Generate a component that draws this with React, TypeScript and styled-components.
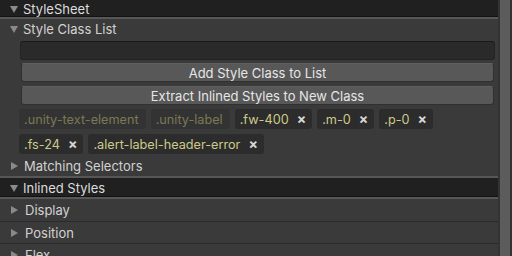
import React from "react";
import styled, { createGlobalStyle } from "styled-components";

const Global = createGlobalStyle`
  html, body { margin: 0; padding: 0; background: #383838; }
  body { font-family: Inter, "Noto Sans", sans-serif; }
`;

const Window = styled.div`
  width: 512px;
  height: 256px;
  display: flex;
  overflow: hidden;
  background: #3a3a3a;
`;

const Main = styled.div`
  flex: 1;
  display: flex;
  flex-direction: column;
  min-width: 0;
`;

const ScrollTrack = styled.div`
  width: 14px;
  background: #333333;
  display: flex;
  padding: 0 2px 0 2px;
  box-sizing: border-box;
`;

const ScrollThumb = styled.div`
  flex: 1;
  background: #5c5c5c;
`;

const Header = styled.div<{ $top?: boolean }>`
  height: ${(p) => (p.$top ? 23 : 19)}px;
  box-sizing: border-box;
  display: flex;
  align-items: center;
  gap: 5px;
  padding-left: 10px;
  background: #202020;
  border-top: ${(p) => (p.$top ? "2px solid #575757" : "none")};
  border-bottom: 2px solid #575757;
  box-shadow: inset 0 -1px 0 #121212;
  color: #dcdcdc;
  font-size: 13px;
  flex-shrink: 0;
`;

const Foldout = styled.div<{ $h: number; $line?: boolean; $indent?: number }>`
  height: ${(p) => p.$h}px;
  box-sizing: border-box;
  display: flex;
  align-items: center;
  gap: ${(p) => p.$indent ?? 5}px;
  padding-left: 10px;
  color: #d2d2d2;
  font-size: 13px;
  border-bottom: ${(p) => (p.$line ? "1px solid #2a2a2a" : "none")};
  flex-shrink: 0;
`;

const Tri = styled.span<{ $open?: boolean }>`
  width: 0;
  height: 0;
  ${(p) =>
    p.$open
      ? `border-left: 4.5px solid transparent; border-right: 4.5px solid transparent; border-top: 7px solid #8a8a8a; margin-top: 1px;`
      : `border-top: 4px solid transparent; border-bottom: 4px solid transparent; border-left: 7px solid #8a8a8a; margin-left: 1px; margin-right: 1px;`}
`;

const Body = styled.div`
  display: flex;
  flex-direction: column;
  padding: 3px 4px 1px 20px;
  gap: 3px;
  flex-shrink: 0;
`;

const Input = styled.div`
  height: 19px;
  box-sizing: border-box;
  background: #2a2a2a;
  border: 1px solid #232323;
  border-top-color: #1a1a1a;
  border-radius: 3px;
  margin-right: -1px;
`;

const Button = styled.div<{ $mt?: number }>`
  height: 19px;
  box-sizing: border-box;
  margin-top: ${(p) => p.$mt ?? 0}px;
  background: #585858;
  border: 1px solid #303030;
  border-top-color: #5f5f5f;
  border-radius: 3px;
  display: flex;
  align-items: center;
  justify-content: center;
  color: #e6e6e6;
  font-size: 13px;
  margin-left: 1px;
`;

const Tags = styled.div`
  display: flex;
  flex-wrap: wrap;
  gap: 5px 5px;
  margin-top: 1px;
  margin-left: -1px;
`;

const Tag = styled.div<{ $dim?: boolean }>`
  height: 20px;
  box-sizing: border-box;
  display: flex;
  align-items: center;
  gap: 8px;
  padding: 0 6px 0 5px;
  border-radius: 3px;
  background: ${(p) => (p.$dim ? "#333333" : "#2c2c2c")};
  color: ${(p) => (p.$dim ? "#7b7954" : "#cdca8a")};
  font-size: 12.7px;
  padding-right: ${(p) => (p.$dim ? 7 : 6)}px;
`;

const Close = styled.span`
  color: #d6d6d6;
  font-size: 14px;
  font-weight: 700;
  line-height: 1;
`;

const tags: { name: string; dim?: boolean }[] = [
  { name: ".unity-text-element", dim: true },
  { name: ".unity-label", dim: true },
  { name: ".fw-400" },
  { name: ".m-0" },
  { name: ".p-0" },
  { name: ".fs-24" },
  { name: ".alert-label-header-error" },
];

export default function App() {
  return (
    <Window>
      <Global />
      <Main>
        <Header>
          <Tri $open />
          StyleSheet
        </Header>
        <Foldout $h={19}>
          <Tri $open />
          Style Class List
        </Foldout>
        <Body>
          <Input />
          <Button>Add Style Class to List</Button>
          <Button $mt={1}>Extract Inlined Styles to New Class</Button>
          <Tags>
            {tags.map((t) => (
              <Tag key={t.name} $dim={t.dim}>
                {t.name}
                {!t.dim && <Close>×</Close>}
              </Tag>
            ))}
          </Tags>
        </Body>
        <Foldout $h={21}>
          <Tri />
          Matching Selectors
        </Foldout>
        <Header $top>
          <Tri $open />
          Inlined Styles
        </Header>
        <Foldout $h={23} $line $indent={6}>
          <Tri />
          Display
        </Foldout>
        <Foldout $h={22} $line $indent={6}>
          <Tri />
          Position
        </Foldout>
        <Foldout $h={22} $line $indent={6}>
          <Tri />
          Flex
        </Foldout>
      </Main>
      <ScrollTrack>
        <ScrollThumb />
      </ScrollTrack>
    </Window>
  );
}
